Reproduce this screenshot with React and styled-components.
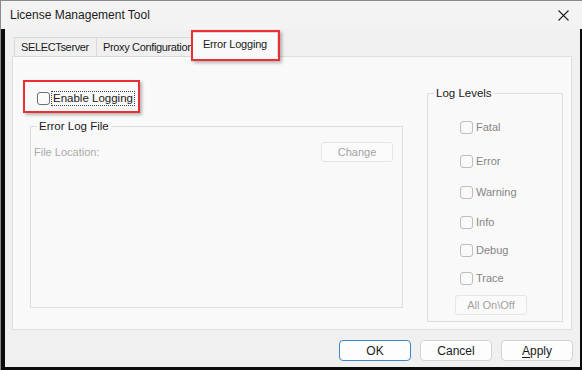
import React from 'react';
import styled, { createGlobalStyle } from 'styled-components';

const GlobalStyle = createGlobalStyle`
  html, body {
    margin: 0;
    padding: 0;
    background: #f0f0f0;
  }
  body {
    font-family: "Liberation Sans", Arial, sans-serif;
  }
  * {
    box-sizing: border-box;
  }
`;

const Window = styled.div`
  width: 582px;
  height: 370px;
  display: flex;
  flex-direction: column;
  border-top: 1px solid #8a8a8a;
  border-left: 1px solid #8a8a8a;
  background: #f0f0f0;
  overflow: hidden;
`;

const TitleBar = styled.div`
  height: 28px;
  flex-shrink: 0;
  display: flex;
  align-items: center;
  justify-content: space-between;
  padding: 0 13px 0 9px;
  background: #f3f3f3;
  font-size: 12px;
  color: #1a1a1a;
`;

const Body = styled.div`
  flex: 1;
  display: flex;
  flex-direction: column;
  border-left: 4px solid #0b0b0b;
  border-right: 2px solid #0b0b0b;
  border-bottom: 3px solid #0b0b0b;
  padding: 4px 7px 0 7px;
`;

const TabRow = styled.div`
  display: flex;
  align-items: flex-end;
  height: 24px;
  padding-left: 2px;
  position: relative;
  z-index: 1;
  margin-bottom: -1px;
`;

const Tab = styled.div`
  position: relative;
  width: ${p => p.$width}px;
  height: ${p => (p.$active ? 25 : 20)}px;
  margin-left: ${p => (p.$active ? -2 : 0)}px;
  margin-right: -1px;
  display: flex;
  align-items: center;
  justify-content: ${p => (p.$active ? 'center' : 'flex-start')};
  padding: ${p => (p.$active ? '0 0 2px 0' : '0 0 0 6px')};
  border: 1px solid #d9d9d9;
  border-bottom: ${p => (p.$active ? 'none' : '1px solid #d9d9d9')};
  background: ${p => (p.$active ? '#f9f9f9' : '#f0f0f0')};
  z-index: ${p => (p.$active ? 2 : 0)};
  font-size: 11px;
  letter-spacing: ${p => (p.$active ? '-0.2px' : '-0.35px')};
  color: #1a1a1a;
  white-space: nowrap;
`;

const Highlight = styled.div`
  position: absolute;
  left: ${p => p.$left}px;
  top: ${p => p.$top}px;
  width: ${p => p.$w}px;
  height: ${p => p.$h}px;
  border: 2px solid #ea2f36;
  box-shadow: 2px 2px 3px rgba(0, 0, 0, 0.28);
  pointer-events: none;
`;

const Panel = styled.div`
  width: 560px;
  height: 274px;
  display: flex;
  align-items: flex-start;
  gap: 24px;
  padding-left: 17px;
  background: #f9f9f9;
  border: 1px solid #dfdfdf;
`;

const LeftColumn = styled.div`
  width: 373px;
  display: flex;
  flex-direction: column;
  padding-top: 34px;
`;

const EnableRow = styled.div`
  position: relative;
  display: flex;
  align-items: center;
  height: 15px;
  padding-left: 7px;
  gap: 1px;
`;

const Box = styled.span`
  width: 13px;
  height: 13px;
  flex-shrink: 0;
  border: 1px solid ${p => (p.$disabled ? '#bdbdbd' : '#6f6f6f')};
  border-radius: 3px;
  background: ${p => (p.$disabled ? '#f9f9f9' : '#fbfbfb')};
`;

const FocusLabel = styled.span`
  border: 1px dotted #444;
  padding: 0 1px;
  height: 15px;
  line-height: 13px;
  font-size: 11.5px;
  color: #1a1a1a;
`;

const Group = styled.fieldset`
  margin: ${p => p.$top}px 0 0 0;
  padding: 0;
  min-width: 0;
  width: ${p => p.$width}px;
  height: ${p => p.$height}px;
  border: 1px solid #dedede;
`;

const Legend = styled.legend`
  margin-left: 6px;
  padding: 0 2px;
  height: 14px;
  line-height: 14px;
  font-size: 11.5px;
  color: #1a1a1a;
`;

const FileRow = styled.div`
  display: flex;
  align-items: center;
  justify-content: space-between;
  padding: 9px 9px 0 3px;
`;

const MutedText = styled.span`
  font-size: 11px;
  color: #ababab;
`;

const GhostButton = styled.div`
  width: 72px;
  height: 20px;
  display: flex;
  align-items: center;
  justify-content: center;
  border: 1px solid #e6e6e6;
  border-radius: 3px;
  background: #fafafa;
  font-size: 11px;
  color: #a3a3a3;
  margin-left: ${p => p.$left || 0}px;
  margin-top: ${p => p.$top || 0}px;
`;

const LevelList = styled.div`
  display: flex;
  flex-direction: column;
  padding-left: 32px;
`;

const LevelItem = styled.div`
  display: flex;
  align-items: center;
  gap: 3px;
  height: 14px;
  margin-top: ${p => p.$gap}px;
  font-size: 11px;
  color: #858585;
`;

const Footer = styled.div`
  display: flex;
  justify-content: flex-end;
  gap: 9px;
  margin-top: 10px;
`;

const DialogButton = styled.div`
  width: 72px;
  height: 21px;
  display: flex;
  align-items: center;
  justify-content: center;
  border: 1px solid ${p => (p.$primary ? '#3f86d0' : '#d3d3d3')};
  border-radius: 4px;
  background: #fdfdfd;
  font-size: 12px;
  color: #1a1a1a;

  u {
    text-decoration-thickness: 1px;
    text-underline-offset: 2px;
  }
`;

const levels = [
  { label: 'Fatal', gap: 20 },
  { label: 'Error', gap: 20 },
  { label: 'Warning', gap: 17 },
  { label: 'Info', gap: 16 },
  { label: 'Debug', gap: 14 },
  { label: 'Trace', gap: 14 },
];

const CloseIcon = () => (
  <svg width="11" height="11" viewBox="0 0 11 11">
    <path d="M0.5 0.5 L10.5 10.5 M10.5 0.5 L0.5 10.5" stroke="#1f1f1f" strokeWidth="1.1" fill="none" />
  </svg>
);

export default function App() {
  return (
    <>
      <GlobalStyle />
      <Window>
        <TitleBar>
          <span>License Management Tool</span>
          <CloseIcon />
        </TitleBar>
        <Body>
          <TabRow>
            <Tab $width={83}>SELECTserver</Tab>
            <Tab $width={99}>Proxy Configuration</Tab>
            <Tab $width={86} $active>
              Error Logging
              <Highlight $left={-2} $top={-3} $w={89} $h={31} />
            </Tab>
          </TabRow>
          <Panel>
            <LeftColumn>
              <EnableRow>
                <Box />
                <FocusLabel>Enable Logging</FocusLabel>
                <Highlight $left={-7} $top={-11} $w={117} $h={33} />
              </EnableRow>
              <Group $top={13} $width={373} $height={189}>
                <Legend>Error Log File</Legend>
                <FileRow>
                  <MutedText>File Location:</MutedText>
                  <GhostButton>Change</GhostButton>
                </FileRow>
              </Group>
            </LeftColumn>
            <Group $top={29} $width={136} $height={236}>
              <Legend>Log Levels</Legend>
              <LevelList>
                {levels.map(level => (
                  <LevelItem key={level.label} $gap={level.gap}>
                    <Box $disabled />
                    {level.label}
                  </LevelItem>
                ))}
              </LevelList>
              <GhostButton $left={27} $top={10}>All On\Off</GhostButton>
            </Group>
          </Panel>
          <Footer>
            <DialogButton $primary>OK</DialogButton>
            <DialogButton>Cancel</DialogButton>
            <DialogButton>
              <span><u>A</u>pply</span>
            </DialogButton>
          </Footer>
        </Body>
      </Window>
    </>
  );
}
